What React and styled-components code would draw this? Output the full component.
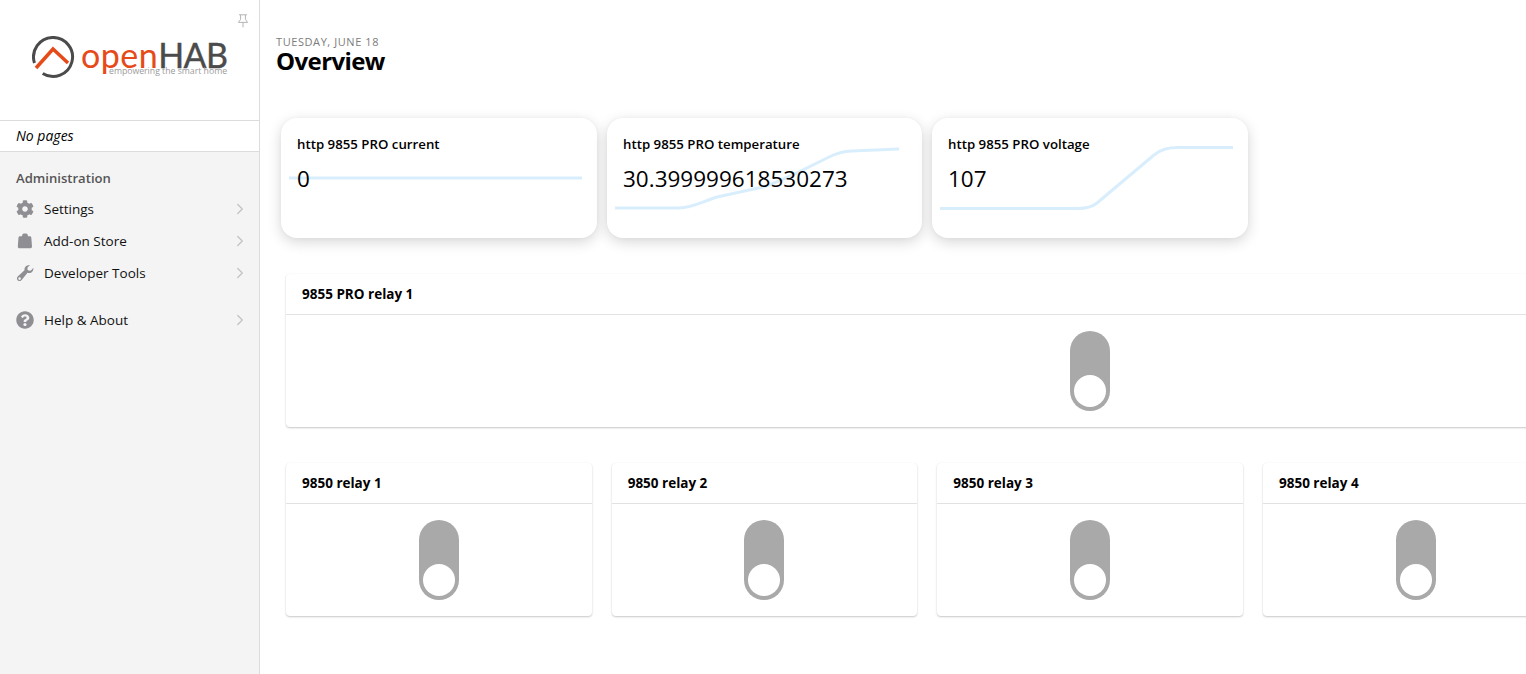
import React from 'react'
import styled, { createGlobalStyle } from 'styled-components'
import { FaCog, FaQuestionCircle } from 'react-icons/fa'
import { FiChevronRight } from 'react-icons/fi'

const GlobalStyle = createGlobalStyle`
  html, body {
    margin: 0;
    height: 100%;
    overflow: hidden;
    background: #fff;
    font-family: "Open Sans", "Noto Sans", "Liberation Sans", sans-serif;
  }
`

const Shell = styled.div`
  display: flex;
  width: 1526px;
  height: 674px;
  overflow: hidden;
`

const Sidebar = styled.aside`
  position: relative;
  flex: 0 0 260px;
  box-sizing: border-box;
  border-right: 1px solid #dcdcdc;
  background: #f4f4f4;
`

const LogoArea = styled.div`
  height: 120px;
  box-sizing: border-box;
  padding: 36px 0 0 32px;
  background: #fff;
`

const Logo = styled.div`
  display: flex;
  align-items: flex-start;
  gap: 5px;
`

const Wordmark = styled.div`
  display: flex;
  flex-direction: column;
  margin-top: 3px;
`

const Name = styled.div`
  font-family: "Lato", sans-serif;
  font-size: 34px;
  line-height: 32px;
  letter-spacing: 0.5px;
  color: #e64a19;
  white-space: nowrap;
`

const NameDark = styled.span`
  font-size: 34px;
  font-weight: 400;
  letter-spacing: -0.6px;
  color: #4b4b4b;
  -webkit-text-stroke: 0.4px #4b4b4b;
`

const Tagline = styled.div`
  margin: -5px 0 0 28px;
  font-size: 8.7px;
  line-height: 11px;
  color: #9a9a9a;
  white-space: nowrap;
`

const PinButton = styled.div`
  position: absolute;
  top: 11px;
  right: 10px;
  width: 12px;
  height: 14px;
  color: #b4b4b4;
`

const NoPages = styled.div`
  height: 32px;
  box-sizing: border-box;
  padding-left: 16px;
  border-top: 1px solid #dcdcdc;
  border-bottom: 1px solid #dcdcdc;
  background: #fff;
  font-size: 14px;
  font-style: italic;
  line-height: 29px;
  color: #000;
`

const SectionTitle = styled.div`
  padding: 17px 0 0 16px;
  height: 24px;
  font-size: 13.1px;
  font-weight: 600;
  line-height: 18px;
  color: #555;
`

const MenuList = styled.nav`
  margin-bottom: ${(p) => p.$gap || 0}px;
`

const MenuRow = styled.div`
  display: flex;
  align-items: center;
  height: 32px;
  padding: 0 16px;
`

const MenuIcon = styled.span`
  display: flex;
  justify-content: center;
  flex: 0 0 18px;
  margin-right: 10px;
  color: #8e8e93;
  font-size: 18px;
`

const MenuLabel = styled.span`
  flex: 1;
  font-size: 13.5px;
  color: #111;
`

const Chevron = styled(FiChevronRight)`
  margin-right: -6px;
  font-size: 18px;
  stroke-width: 1.8;
  color: #c4c4c8;
`

const Main = styled.main`
  flex: 1;
  min-width: 0;
  overflow: hidden;
  padding: 35px 0 0 16px;
`

const DateLine = styled.div`
  font-size: 11px;
  line-height: 13px;
  letter-spacing: 0.58px;
  text-transform: uppercase;
  color: #7c7c7c;
`

const Title = styled.h1`
  margin: 1px 0 0;
  font-size: 24px;
  font-weight: 700;
  line-height: 24px;
  letter-spacing: -0.6px;
  color: #000;
`

const Row = styled.div`
  display: flex;
  gap: ${(p) => p.$gap}px;
  margin: ${(p) => p.$margin};
`

const StatCard = styled.div`
  position: relative;
  flex: 0 0 auto;
  width: ${(p) => p.$w}px;
  height: 120px;
  box-sizing: border-box;
  padding: 17px 16px 0;
  border-radius: 16px;
  background: #fff;
  box-shadow: 0 4px 14px rgba(0, 0, 0, 0.16), 0 0 4px rgba(0, 0, 0, 0.03);
`

const StatTitle = styled.div`
  position: relative;
  font-size: 13.25px;
  font-weight: 600;
  line-height: 18px;
  color: #000;
`

const StatValue = styled.div`
  position: relative;
  margin-top: 11px;
  font-size: 22.5px;
  line-height: 30px;
  color: #000;
`

const Spark = styled.svg`
  position: absolute;
  inset: 0;
  width: 100%;
  height: 100%;
  fill: none;
  stroke: #d9eefd;
  stroke-width: 3;
`

const ToggleCard = styled.div`
  flex: 0 0 auto;
  width: ${(p) => p.$w}px;
  height: 153px;
  border-radius: 4px;
  background: #fff;
  box-shadow: 0 1px 2px rgba(0, 0, 0, 0.22), 0 0 1px rgba(0, 0, 0, 0.05);
`

const ToggleHead = styled.div`
  height: 41px;
  box-sizing: border-box;
  padding-left: 16px;
  border-bottom: 1px solid #e2e2e5;
  font-size: 13.5px;
  font-weight: 700;
  line-height: 41px;
  color: #000;
`

const ToggleBody = styled.div`
  display: flex;
  justify-content: center;
  padding-top: 16px;
`

const Toggle = styled.div`
  position: relative;
  width: 40px;
  height: 80px;
  border-radius: 20px;
  background: #a9a9a9;

  &::after {
    content: '';
    position: absolute;
    left: 4px;
    bottom: 4px;
    width: 32px;
    height: 32px;
    border-radius: 50%;
    background: #fff;
  }
`

const BagIcon = () => (
  <svg width="18" height="18" viewBox="0 0 18 18" fill="currentColor">
    <path d="M6.2 3.2C6.4 2 7.5 1.6 9 1.6s2.600.4 2.800 1.600l.2 1h1.600c.9 0 1.500.5 1.700 1.400l.7 8.800c0 1.100-.7 1.800-1.800 1.800H3.600c-1.100 0-1.800-.7-1.800-1.800l.7-8.800c.2-.9.800-1.400 1.700-1.400H6z" />
  </svg>
)

const WrenchIcon = () => (
  <svg width="18" height="18" viewBox="0 0 18 18" fill="currentColor" fillRule="evenodd">
    <path d="M11.200 1.400 14.200 1 11.700 3.300 11.400 5.400 12.900 6.700 15 6.400 17.400 3.800C17.600 6.500 16.500 8.300 14.400 8.900 13.300 9.200 12.300 9.100 11.500 8.700L5.900 15.700C4.900 17 3.200 17.400 1.900 16.400.6 15.300.6 13.500 1.700 12.400L8.500 6.300C8.200 4 9.100 2.200 11.200 1.400ZM3.600 13.300A1.300 1.300 0 1 0 3.600 15.900 1.300 1.300 0 1 0 3.600 13.300Z" />
  </svg>
)

const PinIcon = () => (
  <svg width="12" height="14" viewBox="0 0 12 14" fill="none" stroke="currentColor" strokeWidth="1">
    <path d="M2 .8h8M3.600.8v4.600L1.400 8.400h9.200L8.400 5.400V.8M6 8.400v5" />
  </svg>
)

const LogoMark = () => (
  <svg width="44" height="44" viewBox="0 0 44 44" fill="none">
    <path d="M2.500 27A19.500 19.500 0 1 1 10.700 37.500" stroke="#4b4b4b" strokeWidth="3" />
    <path d="M4 32 21 13 36 27" stroke="#e64a19" strokeWidth="3.500" />
  </svg>
)

const menuTop = [
  { label: 'Settings', icon: <FaCog /> },
  { label: 'Add-on Store', icon: <BagIcon /> },
  { label: 'Developer Tools', icon: <WrenchIcon /> },
]

const stats = [
  { title: 'http 9855 PRO current', value: '0', w: 316, line: 'M8 60H301' },
  {
    title: 'http 9855 PRO temperature',
    value: '30.399999618530273',
    w: 315,
    line: 'M8 90H72C85 90 95 84 110 79L156 69C175 63 190 55 206 47L222 39C230 35 235 33.500 245 33L292 31',
  },
  {
    title: 'http 9855 PRO voltage',
    value: '107',
    w: 316,
    line: 'M8 90.500H146C155 90.500 160 89 165 85L222 37C230 31 236 29.500 246 29.500H301',
  },
]

const relays = ['9850 relay 1', '9850 relay 2', '9850 relay 3', '9850 relay 4']

const MenuItem = ({ icon, label }) => (
  <MenuRow>
    <MenuIcon>{icon}</MenuIcon>
    <MenuLabel>{label}</MenuLabel>
    <Chevron />
  </MenuRow>
)

const App = () => {
  return (
    <Shell>
      <GlobalStyle />
      <Sidebar>
        <PinButton><PinIcon /></PinButton>
        <LogoArea>
          <Logo>
            <LogoMark />
            <Wordmark>
              <Name>open<NameDark>HAB</NameDark></Name>
              <Tagline>empowering the smart home</Tagline>
            </Wordmark>
          </Logo>
        </LogoArea>
        <NoPages>No pages</NoPages>
        <SectionTitle>Administration</SectionTitle>
        <MenuList $gap={15}>
          {menuTop.map((m) => (
            <MenuItem key={m.label} icon={m.icon} label={m.label} />
          ))}
        </MenuList>
        <MenuList>
          <MenuItem icon={<FaQuestionCircle />} label="Help & About" />
        </MenuList>
      </Sidebar>
      <Main>
        <DateLine>Tuesday, June 18</DateLine>
        <Title>Overview</Title>
        <Row $gap={10} $margin="45px 0 0 5px">
          {stats.map((s) => (
            <StatCard key={s.title} $w={s.w}>
              <Spark viewBox={`0 0 ${s.w} 120`}><path d={s.line} /></Spark>
              <StatTitle>{s.title}</StatTitle>
              <StatValue>{s.value}</StatValue>
            </StatCard>
          ))}
        </Row>
        <Row $gap={0} $margin="36px 0 0 10px">
          <ToggleCard $w={1608}>
            <ToggleHead>9855 PRO relay 1</ToggleHead>
            <ToggleBody><Toggle /></ToggleBody>
          </ToggleCard>
        </Row>
        <Row $gap={20} $margin="36px 0 0 10px">
          {relays.map((r) => (
            <ToggleCard key={r} $w={305.67}>
              <ToggleHead>{r}</ToggleHead>
              <ToggleBody><Toggle /></ToggleBody>
            </ToggleCard>
          ))}
        </Row>
      </Main>
    </Shell>
  )
}

export default App
